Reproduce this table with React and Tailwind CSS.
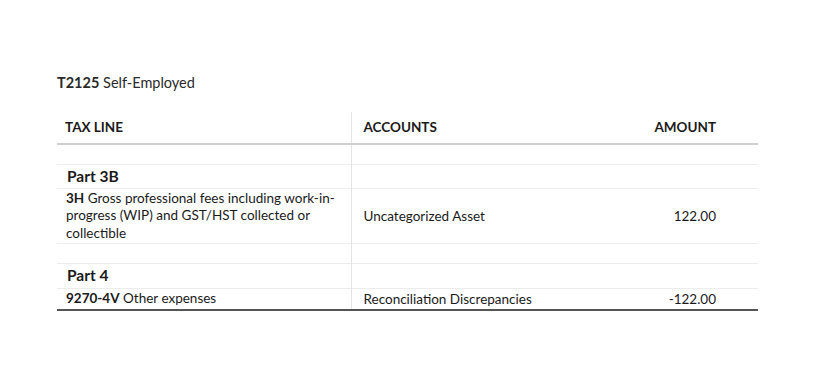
import React from "react";

const rows = [
  { type: "spacer" },
  { type: "part", label: "Part 3B" },
  {
    type: "line",
    code: "3H",
    text: "Gross professional fees including work-in-progress (WIP) and GST/HST collected or collectible",
    account: "Uncategorized Asset",
    amount: "122.00",
    h: "h-[55px]",
  },
  { type: "spacer" },
  { type: "part", label: "Part 4" },
  {
    type: "line",
    code: "9270-4V",
    text: "Other expenses",
    account: "Reconciliation Discrepancies",
    amount: "-122.00",
    h: "h-[21px]",
    last: true,
  },
];

export default function App() {
  return (
    <div
      className="min-h-[371px] w-[816px] bg-white pl-[57px] pt-[73px] text-[#1a1a1a]"
      style={{ fontFamily: "Lato, 'Open Sans', sans-serif" }}
    >
      <p className="text-[14.5px] leading-[19px] text-[#2a2a2a]">
        <span className="font-bold">T2125</span> Self-Employed
      </p>

      <table className="mt-[20px] w-[701px] border-collapse text-[13.5px]">
        <thead>
          <tr className="h-[32px] border-b-2 border-[#cfcfcf]">
            <th className="w-[294px] pl-[8px] text-left font-bold">TAX LINE</th>
            <th className="w-[250px] border-l border-[#e4e4e4] pl-[12px] text-left font-bold">
              ACCOUNTS
            </th>
            <th className="pr-[42px] text-right font-bold">AMOUNT</th>
          </tr>
        </thead>
        <tbody>
          {rows.map((r, i) => {
            if (r.type === "spacer") {
              return (
                <tr key={i} className="h-[20px] border-b border-[#ececec]">
                  <td></td>
                  <td className="border-l border-[#e4e4e4]"></td>
                  <td></td>
                </tr>
              );
            }
            if (r.type === "part") {
              return (
                <tr key={i} className="h-[23px] border-b border-[#ececec]">
                  <td className="pl-[10px] text-[15.5px] font-bold">{r.label}</td>
                  <td className="border-l border-[#e4e4e4]"></td>
                  <td></td>
                </tr>
              );
            }
            return (
              <tr
                key={i}
                className={`${r.h} ${
                  r.last ? "border-b-2 border-[#555555]" : "border-b border-[#ececec]"
                }`}
              >
                <td className="py-[1px] pl-[9px] pr-[8px] leading-[17.5px]">
                  <span className="font-bold">{r.code}</span> {r.text}
                </td>
                <td className="border-l border-[#e4e4e4] pl-[12px]">{r.account}</td>
                <td className="pr-[42px] text-right">{r.amount}</td>
              </tr>
            );
          })}
        </tbody>
      </table>
    </div>
  );
}
